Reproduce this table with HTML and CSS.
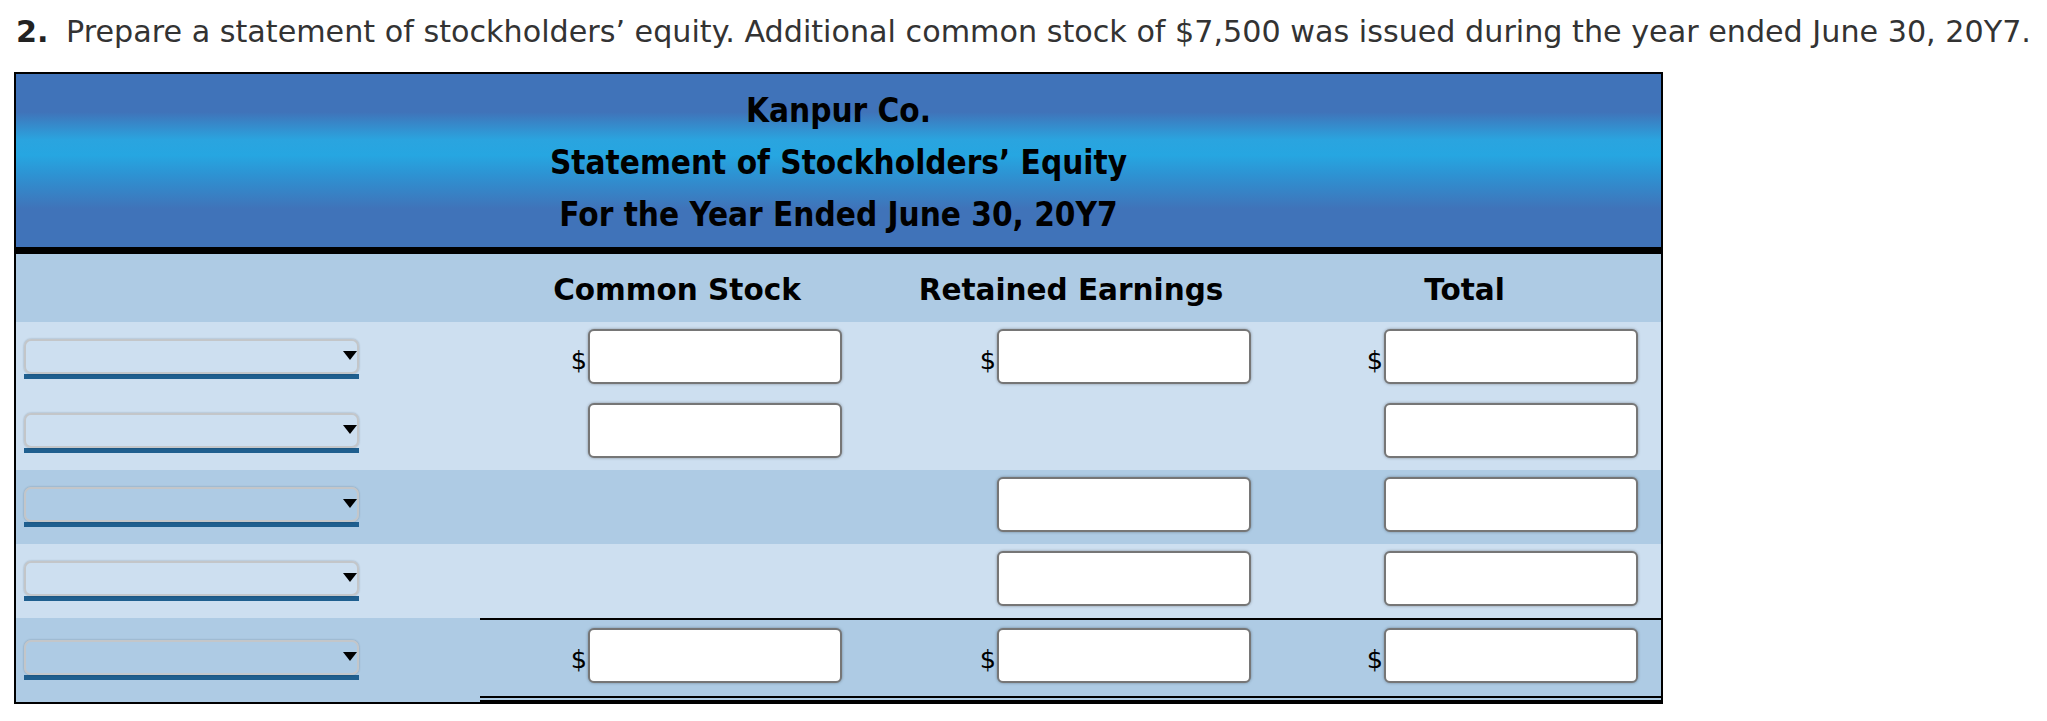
FILE: index.html
```html
<!DOCTYPE html>
<html lang="en">
<head>
<meta charset="utf-8">
<title>Statement of Stockholders’ Equity</title>
<link rel="stylesheet" href="styles.css">
</head>
<body>
<div class="page">
  <p class="question"><b class="num">2.</b> Prepare a statement of stockholders’ equity. Additional common stock of $7,500 was issued during the year ended June 30, 20Y7.</p>
  <div class="sheet">
    <div class="title">
      <div class="title-line">Kanpur Co.</div>
      <div class="title-line">Statement of Stockholders’ Equity</div>
      <div class="title-line">For the Year Ended June 30, 20Y7</div>
    </div>
    <div class="row head">
      <div class="cell label"></div>
      <div class="cell colhead">Common Stock</div>
      <div class="cell colhead">Retained Earnings</div>
      <div class="cell colhead">Total</div>
    </div>
    <div class="row light">
      <div class="cell label"><div class="dd"><span class="arrow"></span></div></div>
      <div class="cell amt c1"><span class="dollar">$</span><span class="inp"></span></div>
      <div class="cell amt c2"><span class="dollar">$</span><span class="inp"></span></div>
      <div class="cell amt c3"><span class="dollar">$</span><span class="inp"></span></div>
    </div>
    <div class="row light">
      <div class="cell label"><div class="dd"><span class="arrow"></span></div></div>
      <div class="cell amt c1"><span class="inp"></span></div>
      <div class="cell amt c2"></div>
      <div class="cell amt c3"><span class="inp"></span></div>
    </div>
    <div class="row dark">
      <div class="cell label"><div class="dd"><span class="arrow"></span></div></div>
      <div class="cell amt c1"></div>
      <div class="cell amt c2"><span class="inp"></span></div>
      <div class="cell amt c3"><span class="inp"></span></div>
    </div>
    <div class="row light">
      <div class="cell label"><div class="dd"><span class="arrow"></span></div></div>
      <div class="cell amt c1"></div>
      <div class="cell amt c2"><span class="inp"></span></div>
      <div class="cell amt c3"><span class="inp"></span></div>
    </div>
    <div class="row dark final">
      <div class="cell label"><div class="dd"><span class="arrow"></span></div></div>
      <div class="cell amt c1 tot"><span class="dollar">$</span><span class="inp"></span></div>
      <div class="cell amt c2 tot"><span class="dollar">$</span><span class="inp"></span></div>
      <div class="cell amt c3 tot"><span class="dollar">$</span><span class="inp"></span></div>
    </div>
  </div>
</div>
</body>
</html>
```

FILE: styles.css
```css
* { box-sizing: border-box; }
html, body { margin: 0; padding: 0; background: #fff; }
body { font-family: "DejaVu Sans", Verdana, sans-serif; color: #000; }

.page { padding: 15px 0 0 14px; }

.question {
  margin: 0 0 23px 2px;
  font-size: 30.2px;
  line-height: 34px;
  color: #333;
  white-space: nowrap;
}
.question .num { color: #222; margin-right: 8px; }

.sheet {
  width: 1649px;
  border: 2px solid #000;
}

.title {
  height: 180px;
  border-bottom: 7px solid #000;
  padding-top: 11px;
  background: linear-gradient(to bottom,
    #4073b9 0%, #4073b9 22%, #2aa4df 38%, #26a6e1 47%, #2d93d3 58%, #4073b9 78%, #4073b9 100%);
  text-align: center;
  font-family: "DejaVu Sans Condensed", "DejaVu Sans", sans-serif;
  font-stretch: semi-condensed;
  font-weight: bold;
  font-size: 33px;
}
.title-line { height: 52px; line-height: 52px; }

.row {
  display: grid;
  grid-template-columns: 464px 394px 394px 393px;
  height: 74px;
}
.row.head { height: 68px; background: #aecbe4; }
.row.light { background: #cddff0; }
.row.dark { background: #aecbe4; }
.row.final { height: 84px; }

.cell { display: flex; }
.label { align-items: center; padding-left: 8px; }
.colhead {
  align-items: center;
  justify-content: center;
  font-weight: bold;
  font-size: 29.5px;
  padding-top: 3px;
}

.amt { justify-content: flex-end; align-items: flex-start; padding-top: 7px; }
.c1 { padding-right: 32px; }
.c2 { padding-right: 17px; }
.c3 { padding-right: 23px; }
.amt.tot {
  border-top: 2px solid #000;
  border-bottom: 6px double #000;
  padding-top: 8px;
}

.dollar {
  font-size: 25.6px;
  line-height: 55px;
  margin-right: 1px;
  padding-top: 4px;
}
.inp {
  width: 254px;
  height: 55px;
  background: #fff;
  border: 2px solid #767676;
  border-radius: 6px;
  box-shadow: 0 0 3px rgba(0, 0, 0, 0.35);
}

.dd {
  position: relative;
  width: 335px;
  height: 40px;
  border-bottom: 5px solid #1f5f8f;
}
.dd::before {
  content: "";
  position: absolute;
  left: 0; right: 0; top: 0; bottom: 0;
  border: 2px solid #c3c6c9;
  border-radius: 7px;
  box-shadow: 0 0 2px rgba(0, 0, 0, 0.3);
}
.arrow {
  position: absolute;
  right: 2px;
  top: 12px;
  width: 0; height: 0;
  border-left: 7.5px solid transparent;
  border-right: 7.5px solid transparent;
  border-top: 9px solid #000;
}
```
